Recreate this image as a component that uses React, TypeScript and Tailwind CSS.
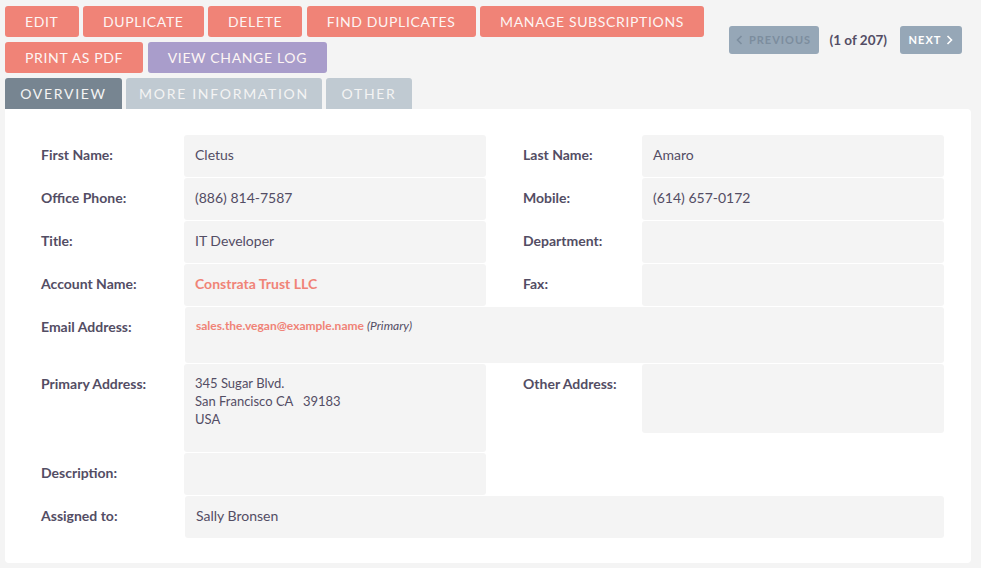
import React from "react";

const font = { fontFamily: "Lato, 'Open Sans', sans-serif" };

function Btn({ label, purple }: { label: string; purple?: boolean }) {
  return (
    <button
      className={
        "h-[31px] px-5 rounded-[3px] text-[14px] tracking-[0.65px] uppercase text-[#fdf5f4] leading-none " +
        (purple ? "bg-[#a99dcb]" : "bg-[#f08377]")
      }
    >
      {label}
    </button>
  );
}

function Label({ text, w, pl }: { text: string; w: string; pl?: string }) {
  return (
    <div className={"shrink-0 pt-[10px] font-bold text-[14px] leading-[20px] " + w + " " + (pl || "")}>
      {text}
    </div>
  );
}

function Val({ children, w, h = "h-[42px]" }: { children?: React.ReactNode; w: string; h?: string }) {
  return (
    <div className={"shrink-0 bg-[#f4f4f4] rounded-[3px] pl-[11px] pt-[10px] text-[14px] leading-[20px] " + w + " " + h}>
      {children}
    </div>
  );
}

export default function App() {
  return (
    <div className="w-[981px] h-[568px] bg-[#f4f4f4] text-[#534d64] overflow-hidden" style={font}>
      <div className="flex justify-between pl-[5px] pr-[19px] pt-[6px]">
        <div className="flex flex-col gap-[5px]">
          <div className="flex gap-[4.5px]">
            <Btn label="Edit" />
            <Btn label="Duplicate" />
            <Btn label="Delete" />
            <Btn label="Find Duplicates" />
            <Btn label="Manage Subscriptions" />
          </div>
          <div className="flex gap-[4.5px]">
            <Btn label="Print as PDF" />
            <Btn label="View Change Log" purple />
          </div>
        </div>
        <div className="flex items-center mt-[20px] h-[28px]">
          <button className="h-[28px] w-[90px] rounded-[3px] bg-[#96a7b7] text-[#7c8d9e] text-[11px] font-bold tracking-[1px] flex items-center justify-center gap-[6px]">
            <svg width="7" height="10" viewBox="0 0 7 10" fill="none" stroke="#7c8d9e" strokeWidth="1.6">
              <path d="M5.5 1 L1.5 5 L5.5 9" />
            </svg>
            PREVIOUS
          </button>
          <span className="ml-[11px] mr-[13px] text-[13.5px] font-bold">(1 of 207)</span>
          <button className="h-[28px] w-[62px] rounded-[3px] bg-[#96a7b7] text-white text-[11px] font-bold tracking-[1px] flex items-center justify-center gap-[5px]">
            NEXT
            <svg width="7" height="10" viewBox="0 0 7 10" fill="none" stroke="#ffffff" strokeWidth="1.6">
              <path d="M1.5 1 L5.5 5 L1.5 9" />
            </svg>
          </button>
        </div>
      </div>

      <div className="flex gap-[4px] pl-[5px] mt-[5px]">
        <div className="h-[31px] w-[117px] rounded-t-[3px] bg-[#778591] text-[#f4f4f4] text-[14px] tracking-[1.7px] flex items-center justify-center">
          OVERVIEW
        </div>
        <div className="h-[31px] w-[196px] rounded-t-[3px] bg-[#c0cad2] text-[#f4f4f4] text-[14px] tracking-[1.7px] flex items-center justify-center">
          MORE INFORMATION
        </div>
        <div className="h-[31px] w-[86px] rounded-t-[3px] bg-[#c0cad2] text-[#f4f4f4] text-[14px] tracking-[1.7px] flex items-center justify-center">
          OTHER
        </div>
      </div>

      <div className="ml-[5px] w-[966px] h-[454px] bg-white rounded-b-[4px] rounded-tr-[4px] pl-[36px] pt-[26px] flex flex-col gap-[1px]">
        {[
          ["First Name:", "Cletus", "Last Name:", "Amaro"],
          ["Office Phone:", "(886) 814-7587", "Mobile:", "(614) 657-0172"],
          ["Title:", "IT Developer", "Department:", ""],
          ["Account Name:", "__acct", "Fax:", ""],
        ].map((r) => (
          <div key={r[0]} className="flex">
            <Label text={r[0]} w="w-[143px]" />
            <Val w="w-[302px]">
              {r[1] === "__acct" ? (
                <span className="font-bold text-[#f08377]">Constrata Trust LLC</span>
              ) : (
                r[1]
              )}
            </Val>
            <Label text={r[2]} w="w-[156px]" pl="pl-[37px]" />
            <Val w="w-[302px]">{r[3]}</Val>
          </div>
        ))}

        <div className="flex">
          <Label text="Email Address:" w="w-[144px]" />
          <Val w="w-[759px]" h="h-[56px]">
            <div className="text-[12px] leading-[18px]">
              <span className="font-bold text-[#f08377]">sales.the.vegan@example.name</span>{" "}
              <span className="italic">(Primary)</span>
            </div>
          </Val>
        </div>

        <div className="flex items-start">
          <Label text="Primary Address:" w="w-[143px]" />
          <Val w="w-[302px]" h="h-[88px]">
            <div className="text-[13px] leading-[18px] whitespace-pre">
              {"345 Sugar Blvd.\nSan Francisco CA   39183\nUSA"}
            </div>
          </Val>
          <Label text="Other Address:" w="w-[156px]" pl="pl-[37px]" />
          <Val w="w-[302px]" h="h-[69px]" />
        </div>

        <div className="flex">
          <Label text="Description:" w="w-[143px]" />
          <Val w="w-[302px]" />
        </div>

        <div className="flex">
          <Label text="Assigned to:" w="w-[144px]" />
          <Val w="w-[759px]">Sally Bronsen</Val>
        </div>
      </div>
    </div>
  );
}
